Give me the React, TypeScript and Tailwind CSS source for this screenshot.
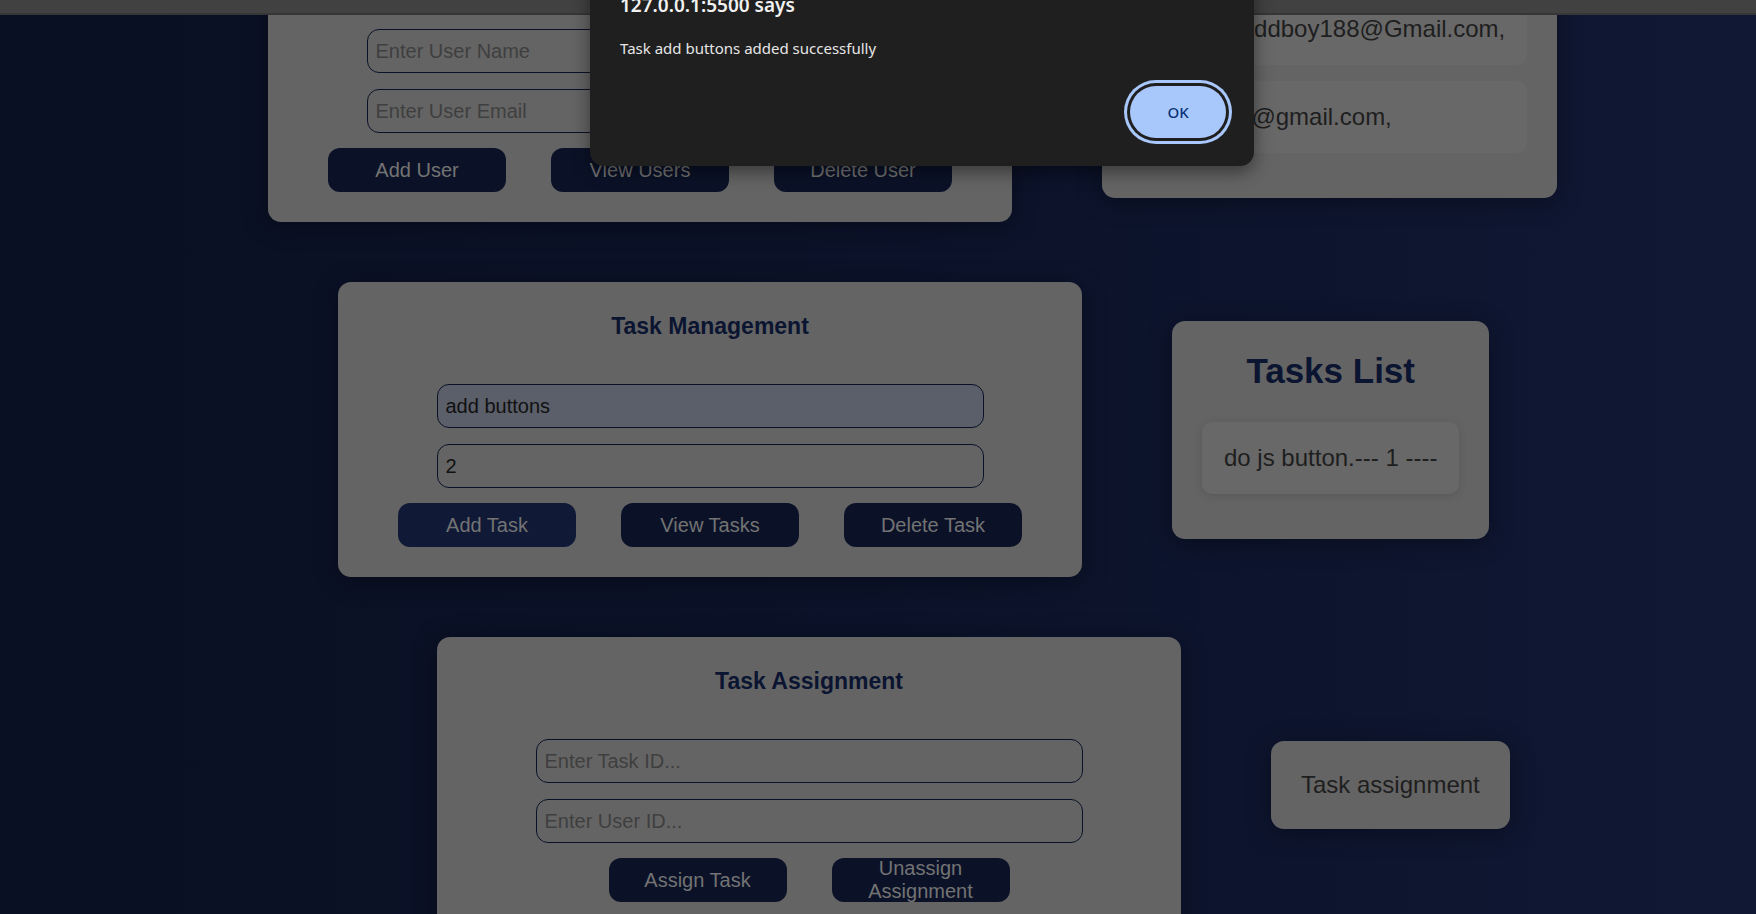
import React from 'react';

const inputBase =
  'w-full h-[44px] rounded-[12px] border border-[#0b1228] px-[8px] text-[20px] text-[#111111] placeholder:text-[#3f3f3f] outline-none';

const buttonBase =
  'w-[178px] h-[44px] rounded-[12px] flex items-center justify-center text-center text-[20px] leading-[23px] text-[#737373]';

interface FormCardProps {
  title: string;
  inputs: { placeholder: string; value?: string; active?: boolean }[];
  buttons: { label: string; hover?: boolean }[];
}

// Left column cards (form + action buttons)
const FormCard: React.FC<FormCardProps> = ({ title, inputs, buttons }) => (
  <div className="w-[744px] shrink-0 rounded-[13px] bg-[#646464] pt-[30px] pb-[30px] flex flex-col items-center shadow-[0_4px_24px_rgba(0,0,0,0.35)]">
    <h2 className="text-[23px] leading-[28px] font-bold text-[#0b1430]">{title}</h2>
    <div className="mt-[44px] w-[547px] flex flex-col gap-[16px]">
      {inputs.map((inp, i) => (
        <input
          key={i}
          placeholder={inp.placeholder}
          defaultValue={inp.value}
          className={`${inputBase} ${inp.active ? 'bg-[#5b5f69]' : 'bg-transparent'}`}
        />
      ))}
    </div>
    <div className="mt-[15px] flex gap-[45px]">
      {buttons.map((b) => (
        <button
          key={b.label}
          className={`${buttonBase} ${b.hover ? 'bg-[#101936]' : 'bg-[#0b1228]'}`}
        >
          {b.label}
        </button>
      ))}
    </div>
  </div>
);

const App: React.FC = () => {
  return (
    <div className="relative w-full h-[914px] overflow-hidden flex flex-col bg-gradient-to-r from-[#0a1023] via-[#0b1229] to-[#101834] font-['Liberation_Sans',Arial,sans-serif]">
      {/* Top strip */}
      <div className="h-[15px] shrink-0 bg-[#414141] border-b-2 border-[#363636] z-10" />

      {/* Page content (scrolled) */}
      <div className="flex-1 overflow-hidden">
        <div className="-mt-[88px] flex flex-col gap-[60px]">
          {/* Users */}
          <div className="flex items-center gap-[90px] pl-[268px]">
            <FormCard
              title="User Management"
              inputs={[{ placeholder: 'Enter User Name' }, { placeholder: 'Enter User Email' }]}
              buttons={[{ label: 'Add User' }, { label: 'View Users' }, { label: 'Delete User' }]}
            />
            <div className="rounded-[13px] bg-[#646464] px-[30px] pt-[42px] pb-[45px] flex flex-col gap-[16px] shadow-[0_4px_24px_rgba(0,0,0,0.35)]">
              <div className="rounded-[10px] bg-[#686868] px-[22px] py-[22px] text-[24px] leading-[28px] text-[#1e1e1e] whitespace-nowrap">
                Abdullah ddboy188@Gmail.com,
              </div>
              <div className="rounded-[10px] bg-[#686868] px-[22px] py-[22px] text-[24px] leading-[28px] text-[#1e1e1e] whitespace-nowrap">
                Ali ali123@gmail.com,
              </div>
            </div>
          </div>

          {/* Tasks */}
          <div className="flex items-center gap-[90px] pl-[338px]">
            <FormCard
              title="Task Management"
              inputs={[{ placeholder: 'Enter Task Name', value: 'add buttons', active: true }, { placeholder: 'Enter User ID', value: '2' }]}
              buttons={[{ label: 'Add Task', hover: true }, { label: 'View Tasks' }, { label: 'Delete Task' }]}
            />
            <div className="rounded-[13px] bg-[#646464] px-[30px] pt-[30px] pb-[45px] flex flex-col items-center shadow-[0_4px_24px_rgba(0,0,0,0.35)]">
              <h2 className="text-[35px] leading-[40px] font-bold text-[#0b1430]">Tasks List</h2>
              <div className="mt-[31px] rounded-[10px] bg-[#686868] px-[22px] py-[22px] text-[24px] leading-[28px] text-[#1e1e1e] whitespace-nowrap shadow-[0_2px_10px_rgba(0,0,0,0.12)]">
                do js button.--- 1 ----
              </div>
            </div>
          </div>

          {/* Assignment */}
          <div className="flex items-center gap-[90px] pl-[437px]">
            <FormCard
              title="Task Assignment"
              inputs={[{ placeholder: 'Enter Task ID...' }, { placeholder: 'Enter User ID...' }]}
              buttons={[{ label: 'Assign Task' }, { label: 'Unassign Assignment' }]}
            />
            <div className="rounded-[13px] bg-[#646464] p-[30px] text-[24px] leading-[28px] text-[#1e1e1e] whitespace-nowrap shadow-[0_4px_24px_rgba(0,0,0,0.35)]">
              Task assignment
            </div>
          </div>
        </div>
      </div>

      {/* Browser alert dialog */}
      <div className="absolute left-[590px] top-[-31px] w-[664px] h-[197px] z-20 rounded-[14px] bg-[#1f1f1f] flex flex-col pt-[24px] pl-[30px] shadow-[0_6px_18px_rgba(0,0,0,0.45)] font-['Noto_Sans','Open_Sans',sans-serif]">
        <div className="text-[19px] leading-[24px] font-semibold text-[#f1f1f1]">127.0.0.1:5500 says</div>
        <div className="mt-[21px] text-[15px] leading-[20px] text-[#e6e6e6]">Task add buttons added successfully</div>
        <div className="flex-1" />
        <div className="flex justify-end pr-[28px] pb-[28px]">
          <button className="w-[96px] h-[52px] rounded-full bg-[#a8c7fa] text-[15px] font-medium text-[#0a3478] ring-[3px] ring-[#a8c7fa] ring-offset-[3px] ring-offset-[#1f1f1f]">
            OK
          </button>
        </div>
      </div>
    </div>
  );
};

export default App;
